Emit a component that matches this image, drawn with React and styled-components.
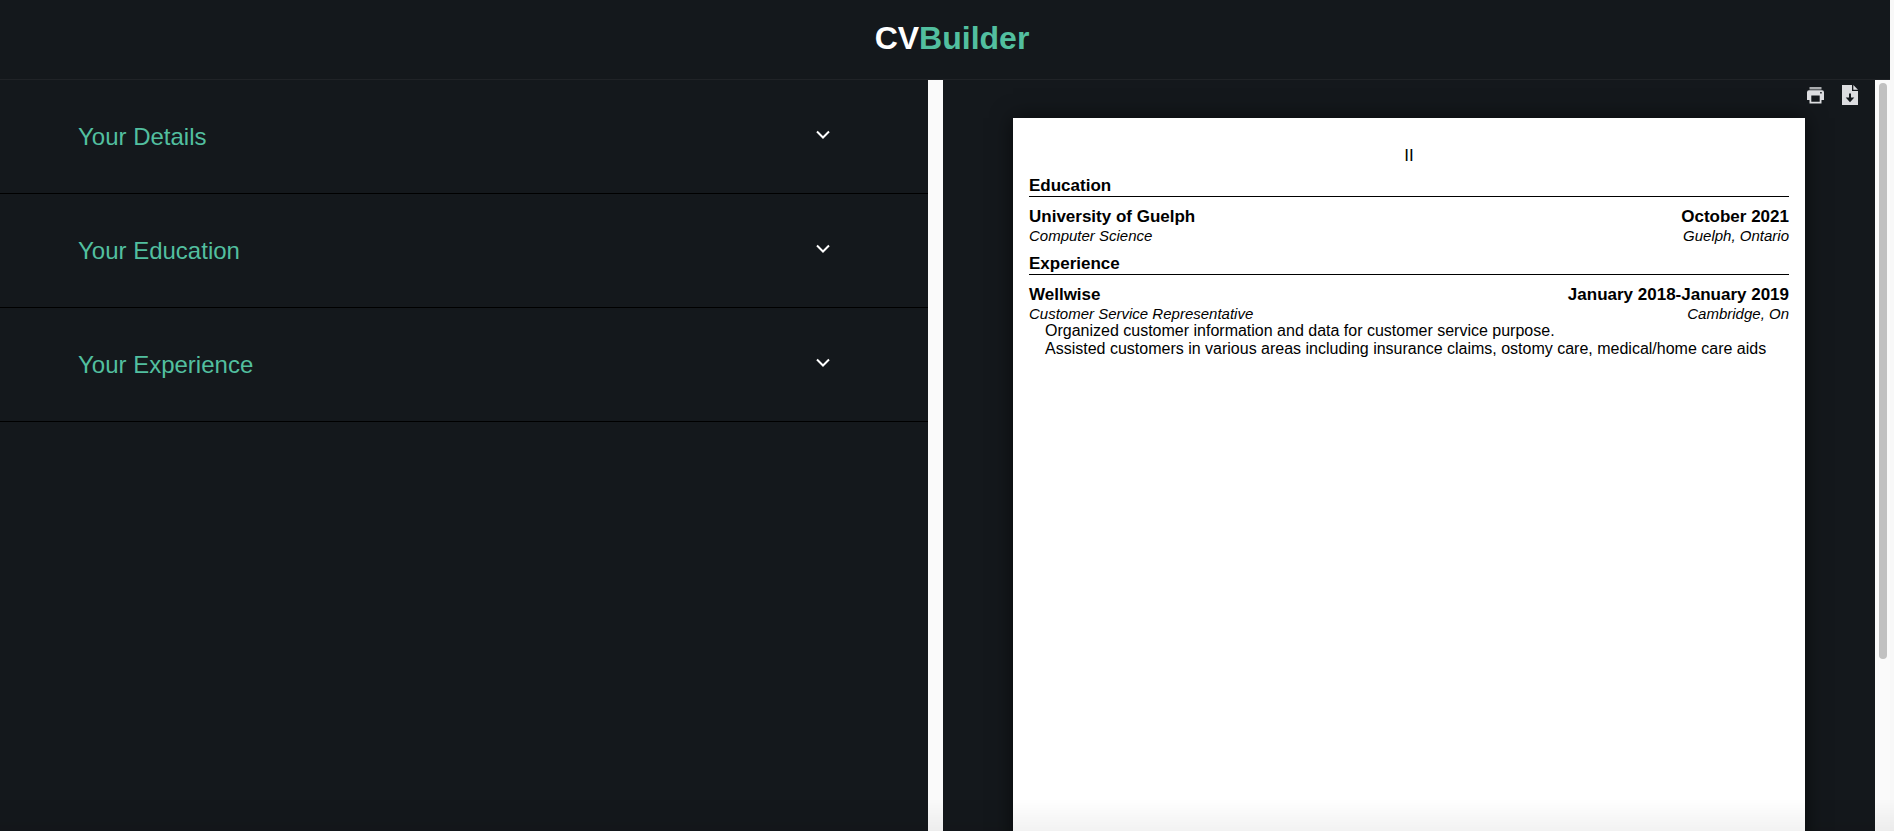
import React from 'react';
import styled, { createGlobalStyle } from 'styled-components';

const GlobalStyle = createGlobalStyle`
  *, *::before, *::after { box-sizing: border-box; }
  body {
    margin: 0;
    background: #fafafa;
    font-family: "Liberation Sans", Arial, Helvetica, sans-serif;
  }
  h1, h2, h3, p, ul { margin: 0; padding: 0; font-size: inherit; font-weight: inherit; }
`;

const Page = styled.div`
  display: flex;
  flex-direction: column;
  height: 100vh;
  border-right: 4px solid #f8f8f8;
  overflow: hidden;
`;

const Header = styled.header`
  display: flex;
  justify-content: center;
  flex: none;
  height: 80px;
  padding: 20px 0 0 14px;
  background: #14181c;
  border-bottom: 1px solid #202327;
`;

const Logo = styled.h1`
  color: #fff;
  font-size: 32px;
  line-height: 36px;
  font-weight: 700;

  span { color: #52bf9f; }
`;

const Main = styled.main`
  display: flex;
  flex: 1;
  min-height: 0;
`;

const Panel = styled.section`
  display: flex;
  flex: ${({ $grow }) => $grow} 1 0;
  min-width: 0;
  background: #14181c;
`;

const PanelBody = styled.div`
  flex: 1;
  min-width: 0;
  overflow: hidden;
`;

const Track = styled.div`
  flex: none;
  width: 15px;
  padding: 3px 3px 0 4px;
  background: #fafafa;
`;

const Thumb = styled.div`
  height: 77%;
  border-radius: 4px;
  background: #c1c1c1;
`;

const AccordionButton = styled.button`
  display: flex;
  align-items: center;
  justify-content: space-between;
  width: 100%;
  height: 114px;
  padding: 0 98px 0 78px;
  border: 0;
  border-bottom: 1px solid #000;
  background: transparent;
  color: #52bf9f;
  font-family: inherit;
  font-size: 24px;
  line-height: 28px;
  cursor: pointer;

  svg {
    margin-bottom: 3px;
    color: #fff;
  }
`;

const Toolbar = styled.div`
  display: flex;
  justify-content: flex-end;
  gap: 15px;
  height: 38px;
  padding: 4px 15px 0 0;
`;

const IconButton = styled.button`
  display: flex;
  align-items: center;
  justify-content: center;
  width: 20px;
  height: 22px;
  padding: 0;
  border: 0;
  background: transparent;
  color: #dcdde0;
  cursor: pointer;
`;

const Paper = styled.article`
  width: 792px;
  height: 297mm;
  max-width: 100%;
  margin: 0 auto;
  padding: 28px 16px;
  background: #fff;
  color: #000;
  box-shadow: 0 0 20px rgba(0, 0, 0, 0.6);
`;

const Contact = styled.p`
  font-size: 17px;
  line-height: 20px;
  text-align: center;
`;

const Section = styled.section`
  margin-top: 10px;
`;

const SectionTitle = styled.h2`
  margin-bottom: 10px;
  border-bottom: 1px solid #000;
  font-size: 17px;
  line-height: 20px;
  font-weight: 700;
`;

const EntryRow = styled.div`
  display: flex;
  justify-content: space-between;
  font-size: 17px;
  line-height: 20px;
  font-weight: 700;
`;

const EntryDetail = styled(EntryRow)`
  font-size: 15px;
  line-height: 17px;
  font-weight: 400;
  font-style: italic;
`;

const Duties = styled.ul`
  padding-left: 16px;
  list-style: none;
  font-size: 16px;
  line-height: 18px;
`;

const BottomShade = styled.div`
  position: fixed;
  inset: auto 0 0 0;
  height: 32px;
  background: linear-gradient(transparent, rgba(0, 0, 0, 0.05));
  pointer-events: none;
`;

const Chevron = () => (
  <svg width="14" height="10" viewBox="0 0 14 10" fill="none" stroke="currentColor" strokeWidth="2" aria-hidden="true">
    <path d="M1 1.5l6 6 6-6" />
  </svg>
);

const PrintIcon = () => (
  <svg width="17" height="18" viewBox="0 0 17 18" fill="currentColor" aria-hidden="true">
    <path d="M2.5 1h12v2.5h-12z" opacity=".75" />
    <path fillRule="evenodd" d="M2 4.2h13a2 2 0 0 1 2 2V14h-2.5v3.5h-12V14H0V6.200a2 2 0 0 1 2-2zM4.300 9.500v6.300h8.400V9.500zM13.200 6v1.500h1.500V6z" />
  </svg>
);

const DownloadIcon = () => (
  <svg width="16" height="20" viewBox="0 0 16 20" fill="currentColor" aria-hidden="true">
    <path fillRule="evenodd" d="M0 0h10v6h6v14H0zM7 8.500v4H3.700L8 17.200l4.300-4.700H9v-4z" />
    <path d="M11.300 0L16 4.800h-4.700z" />
  </svg>
);

const forms = ['Your Details', 'Your Education', 'Your Experience'];

const sections = [
  {
    title: 'Education',
    name: 'University of Guelph',
    date: 'October 2021',
    role: 'Computer Science',
    place: 'Guelph, Ontario',
    duties: [],
  },
  {
    title: 'Experience',
    name: 'Wellwise',
    date: 'January 2018-January 2019',
    role: 'Customer Service Representative',
    place: 'Cambridge, On',
    duties: [
      'Organized customer information and data for customer service purpose.',
      'Assisted customers in various areas including insurance claims, ostomy care, medical/home care aids',
    ],
  },
];

export default function App() {
  return (
    <Page>
      <GlobalStyle />
      <Header>
        <Logo>CV<span>Builder</span></Logo>
      </Header>
      <Main>
        <Panel $grow={943}>
          <PanelBody>
            {forms.map((label) => (
              <AccordionButton key={label} type="button" aria-expanded="false">
                {label}
                <Chevron />
              </AccordionButton>
            ))}
          </PanelBody>
          <Track />
        </Panel>
        <Panel $grow={947}>
          <PanelBody>
            <Toolbar>
              <IconButton type="button" aria-label="Print"><PrintIcon /></IconButton>
              <IconButton type="button" aria-label="Download"><DownloadIcon /></IconButton>
            </Toolbar>
            <Paper>
              <Contact>II</Contact>
              {sections.map((s) => (
                <Section key={s.title}>
                  <SectionTitle>{s.title}</SectionTitle>
                  <EntryRow><h3>{s.name}</h3><span>{s.date}</span></EntryRow>
                  <EntryDetail><span>{s.role}</span><span>{s.place}</span></EntryDetail>
                  {s.duties.length > 0 && (
                    <Duties>{s.duties.map((d) => <li key={d}>{d}</li>)}</Duties>
                  )}
                </Section>
              ))}
            </Paper>
          </PanelBody>
          <Track><Thumb /></Track>
        </Panel>
      </Main>
      <BottomShade />
    </Page>
  );
}
